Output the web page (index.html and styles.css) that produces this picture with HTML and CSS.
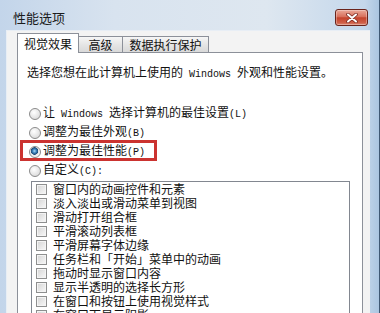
FILE: index.html
```html
<!DOCTYPE html>
<html lang="zh-CN">
<head>
  <meta charset="UTF-8">
  <title>性能选项</title>
  <link rel="stylesheet" href="styles.css">
</head>
<body>
  <div class="window">
    <div class="titlebar">
      <span class="title">性能选项</span>
      <div class="close">
        <svg width="12" height="10" viewBox="0 0 12 10">
          <path d="M2 1.5 L10 8.5 M10 1.5 L2 8.5" stroke="#7a2b22" stroke-width="3.6" stroke-linecap="round"/>
          <path d="M2 1.5 L10 8.5 M10 1.5 L2 8.5" stroke="#fff" stroke-width="2" stroke-linecap="round"/>
        </svg>
      </div>
    </div>
    <div class="frame">
      <div class="client">
        <div class="tabs">
          <div class="tab active">视觉效果</div>
          <div class="tab tab-adv">高级</div>
          <div class="tab tab-dep">数据执行保护</div>
        </div>
        <div class="panel">
          <p class="intro">选择您想在此计算机上使用的<span class="en"> Windows </span>外观和性能设置。</p>
          <div class="options">
            <div class="opt"><span class="radio"></span><span class="label">让<span class="en"> Windows </span>选择计算机的最佳设置<span class="en">(L)</span></span></div>
            <div class="opt"><span class="radio"></span><span class="label">调整为最佳外观<span class="en">(B)</span></span></div>
            <div class="opt marked"><span class="radio on"></span><span class="label">调整为最佳性能<span class="en">(P)</span></span></div>
            <div class="opt"><span class="radio"></span><span class="label">自定义<span class="en">(C):</span></span></div>
          </div>
          <div class="list">
            <div class="item"><span class="check"></span><span class="label">窗口内的动画控件和元素</span></div>
            <div class="item"><span class="check"></span><span class="label">淡入淡出或滑动菜单到视图</span></div>
            <div class="item"><span class="check"></span><span class="label">滑动打开组合框</span></div>
            <div class="item"><span class="check"></span><span class="label">平滑滚动列表框</span></div>
            <div class="item"><span class="check"></span><span class="label">平滑屏幕字体边缘</span></div>
            <div class="item"><span class="check"></span><span class="label">任务栏和「开始」菜单中的动画</span></div>
            <div class="item"><span class="check"></span><span class="label">拖动时显示窗口内容</span></div>
            <div class="item"><span class="check"></span><span class="label">显示半透明的选择长方形</span></div>
            <div class="item"><span class="check"></span><span class="label">在窗口和按钮上使用视觉样式</span></div>
            <div class="item"><span class="check"></span><span class="label">在窗口下显示阴影</span></div>
          </div>
        </div>
      </div>
    </div>
  </div>
</body>
</html>
```

FILE: styles.css
```css
body {
  margin: 0;
  font-family: "Noto Sans CJK SC", sans-serif;
  font-size: 12px;
  color: #111;
  background: #c8d9ec;
}

.window {
  width: 380px;
  height: 313px;
  overflow: hidden;
  display: flex;
  flex-direction: column;
  background: linear-gradient(to right, #c3d5ea, #d8e3ef 30%, #dee7f0 70%, #c4d7eb 96%, #a9c4e0);
  box-shadow: inset -1px 0 #3f5874;
}

.titlebar {
  height: 30px;
  flex: none;
  display: flex;
  justify-content: space-between;
  align-items: flex-start;
  padding: 0 12px 0 13px;
}

.title {
  font-size: 13px;
  line-height: 15px;
  margin-top: 10px;
  color: #1b1b1b;
}

.close {
  width: 31px;
  height: 15px;
  margin-top: 9px;
  border: 1px solid #6a241c;
  border-radius: 3px;
  background: linear-gradient(#eaa898, #d8705c 45%, #c4432c 52%, #cf5f48 85%, #dc8a76);
  box-shadow: inset 0 0 0 1px rgba(255, 255, 255, 0.3);
  display: flex;
  align-items: center;
  justify-content: center;
}

.frame {
  flex: 1;
  display: flex;
  padding: 0 10px 0 6px;
  min-height: 0;
}

.client {
  flex: 1;
  display: flex;
  flex-direction: column;
  background: #f3f3f3;
  border-left: 1px solid #e8eef5;
  border-top: 1px solid #e8eef5;
  padding: 2px 7px 0 10px;
}

.tabs {
  display: flex;
  align-items: flex-end;
  height: 20px;
  margin-bottom: -1px;
  position: relative;
  z-index: 1;
}

.tab {
  box-sizing: border-box;
  height: 16px;
  margin-bottom: 1px;
  border: 1px solid #8c9099;
  border-bottom: none;
  background: linear-gradient(#f6f6f6, #e4e4e4 55%, #d9d9d9);
  line-height: 15px;
  text-align: center;
  font-size: 12px;
}

.tab.active {
  width: 62px;
  height: 20px;
  margin-bottom: 0;
  background: #fff;
  line-height: 20px;
}

.tab-adv {
  width: 44px;
  border-left: none;
}

.tab-dep {
  width: 86px;
  border-left: none;
}

.panel {
  flex: 1;
  border: 1px solid #8c9099;
  background: #fff;
}

.en {
  font-family: "Liberation Mono", monospace;
  font-size: 10px;
  white-space: pre;
}

.intro {
  margin: 12px 0 0 9px;
  line-height: 14px;
}

.options {
  margin: 22px 0 0 11px;
}

.opt {
  position: relative;
  display: flex;
  align-items: center;
  height: 19px;
}

.label {
  line-height: 14px;
  white-space: nowrap;
}

.radio {
  box-sizing: border-box;
  width: 12px;
  height: 12px;
  margin-right: 2px;
  border: 1px solid #8b8b8b;
  border-radius: 50%;
  background: radial-gradient(circle at 40% 35%, #ffffff, #e4e4e4 60%, #cfcfcf);
}

.radio.on {
  background: radial-gradient(circle at 45% 40%, #a9dcf7 0, #3a7fb8 2px, #1d4a75 3.5px, #e6e6e6 4px, #fafafa 6px);
}

.marked::after {
  content: "";
  position: absolute;
  left: -9px;
  top: -2px;
  width: 137px;
  height: 21px;
  box-sizing: border-box;
  border: 3px solid #cb3330;
}

.list {
  margin: 1px 12px 0 13px;
  border: 1px solid #828790;
  background: #fff;
}

.item {
  display: flex;
  align-items: center;
  height: 14px;
  padding-left: 4px;
}

.check {
  box-sizing: border-box;
  width: 11px;
  height: 11px;
  margin-right: 6px;
  border: 1px solid #8e8f8f;
  background: linear-gradient(135deg, #d4d4d4, #eeeeee 70%, #f8f8f8);
  box-shadow: inset 0 0 0 1px #f4f4f4;
}
```
